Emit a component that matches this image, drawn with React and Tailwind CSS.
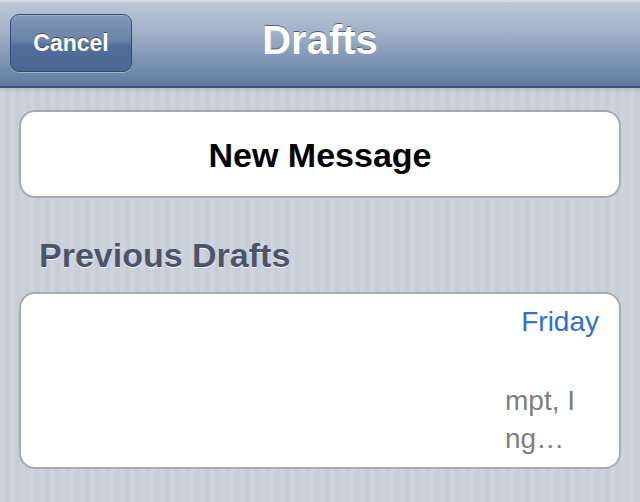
export default function App() {
  const font = { fontFamily: '"Liberation Sans", Arial, sans-serif' };
  return (
    <div
      className="w-[640px] h-[502px] overflow-hidden flex flex-col bg-[repeating-linear-gradient(90deg,#cdd3dc_0px,#cdd3dc_5px,#c8ced8_5px,#c8ced8_10px)]"
      style={font}
    >
      <div className="h-[88px] shrink-0 flex items-center relative border-t-2 border-t-[#d2d9e4] border-b-2 border-b-[#3b5072] bg-[linear-gradient(180deg,#bcc7d8_0%,#a2b2c9_35%,#7890b0_75%,#607aa0_100%)]">
        <div className="ml-[10px] mt-[-2px] w-[122px] h-[58px] rounded-[9px] border border-[#364b6d] bg-[linear-gradient(180deg,#8197b6_0%,#6a83a7_45%,#536e98_55%,#4b6791_100%)] shadow-[inset_0_1px_0_rgba(255,255,255,0.25),0_1px_0_rgba(255,255,255,0.35)] flex items-center justify-center">
          <span className="text-white font-bold text-[23px] [text-shadow:0_-1px_0_rgba(0,0,0,0.45)]">Cancel</span>
        </div>
        <div className="absolute left-0 right-0 top-0 bottom-0 flex items-center justify-center pointer-events-none">
          <span className="mt-[-8px] text-white font-bold text-[40px] [text-shadow:0_-1px_0_rgba(40,55,80,0.7)]">Drafts</span>
        </div>
      </div>
      <div className="h-[6px] shrink-0 bg-[linear-gradient(180deg,rgba(0,0,0,0.1),rgba(0,0,0,0))] mb-[16px]" />
      <div className="mx-[19px] h-[88px] shrink-0 rounded-[16px] bg-white border-2 border-[#a6abb2] flex items-center justify-center">
        <span className="mt-[3px] text-black font-bold text-[34px]">New Message</span>
      </div>
      <div className="ml-[39px] mt-[35px] h-[44px] text-[34px] font-bold text-[#4b5569] [text-shadow:0_1px_0_rgba(255,255,255,0.9)] leading-[44px]">
        Previous Drafts
      </div>
      <div className="mx-[19px] mt-[15px] h-[177px] shrink-0 rounded-[16px] bg-white border-2 border-[#a6abb2] flex flex-col pr-[20px]">
        <div className="self-end mt-[10px] text-[28px] text-[#2f6fd3] leading-[36px]">Friday</div>
        <div className="ml-[484px] mt-[42px] text-[28px] text-[#7f7f7f] leading-[38px]">
          <div>mpt, I</div>
          <div>ng…</div>
        </div>
      </div>
    </div>
  );
}
